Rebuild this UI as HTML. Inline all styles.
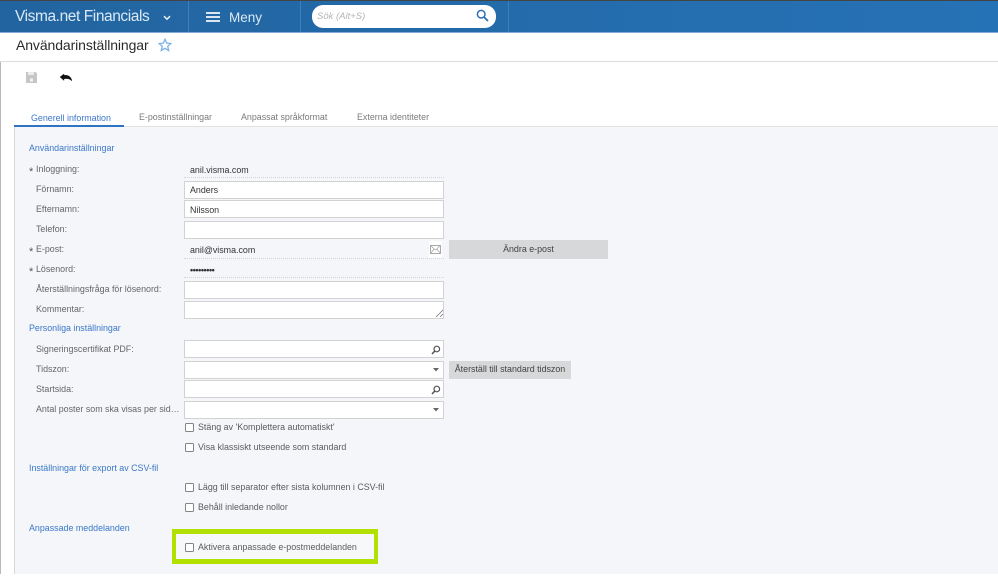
<!DOCTYPE html>
<html lang="sv"><head><meta charset="utf-8"><title>Användarinställningar</title>
<style>
html,body{margin:0;padding:0;background:#fff}
#p{position:relative;width:998px;height:578px;overflow:hidden;background:#fff;font-family:"Liberation Sans",sans-serif;font-size:8.9px;color:#555;filter:blur(.35px)}
#p div,#p span.a,#p svg{position:absolute}
.t{white-space:nowrap;line-height:12px}
.h{color:#3b78c8;left:29px}
.l{left:36px;color:#666}
.s{left:29px;color:#555;font-size:11px}
.i{left:184px;width:258px;background:#fff;border:1px solid #d2d2d2}
.v{left:190px;color:#333}
.c{left:185px;width:7px;height:7px;background:#fff;border:1px solid #858585;border-radius:1.5px}
.k{left:198px;color:#5c5c5c}
.d{left:184px;width:260px;height:0;border-top:1px dotted #d4d4d4}
.b{background:#d7d8da;color:#444;text-align:center}
.tab{top:111px;color:#7b7b7b}
</style></head><body><div id="p">
<div style="left:0;top:0;width:998px;height:1px;background:#444"></div>
<div style="left:0;top:1px;width:998px;height:31px;background:linear-gradient(90deg,#22649f,#2672b6)"></div>
<div style="left:0;top:32px;width:998px;height:1px;background:#7fa9d1"></div>
<div style="left:188px;top:1px;width:1px;height:31px;background:#3f80b8"></div>
<div style="left:300px;top:1px;width:1px;height:31px;background:#3f80b8"></div>
<div style="left:508px;top:1px;width:1px;height:31px;background:#3f80b8"></div>
<div class="t" style="left:15px;top:8px;font-size:15.5px;line-height:18px;letter-spacing:-.42px;color:#dbe9f6">Visma.net Financials</div>
<svg style="left:163px;top:15px" width="8" height="6" viewBox="0 0 8 6"><path d="M1 1.200 4 4.200 7 1.200" fill="none" stroke="#e6f0f8" stroke-width="1.500"/></svg>
<svg style="left:206px;top:12px" width="14" height="10" viewBox="0 0 14 10"><path d="M0 1H14M0 5H14M0 9H14" stroke="#f4f8fc" stroke-width="1.800"/></svg>
<div class="t" style="left:229px;top:10px;font-size:13.500px;line-height:16px;color:#dbe9f6">Meny</div>
<div style="left:312px;top:5px;width:184px;height:23px;background:#fff;border-radius:11px"></div>
<div class="t" style="left:317px;top:11px;font-size:9.500px;font-style:italic;color:#b5b5b5">Sök (Alt+S)</div>
<svg style="left:476px;top:9px" width="13" height="13" viewBox="0 0 13 13"><circle cx="5.200" cy="5.200" r="3.800" fill="none" stroke="#2c70b4" stroke-width="1.500"/><path d="M8 8 12 12" stroke="#2c70b4" stroke-width="1.800"/></svg>

<div class="t" style="left:16px;top:37px;font-size:14px;line-height:17px;letter-spacing:-.1px;color:#2b2b2b">Användarinställningar</div>
<svg style="left:158px;top:38px" width="14" height="14" viewBox="0 0 14 14"><path d="M7 1.200 8.700 5.100 12.900 5.500 9.700 8.300 10.700 12.500 7 10.300 3.300 12.500 4.300 8.300 1.100 5.500 5.300 5.100Z" fill="none" stroke="#7fb0e6" stroke-width="1.300"/></svg>
<div style="left:0;top:61px;width:998px;height:1px;background:#dcdcdc"></div>

<svg style="left:26px;top:72px" width="11" height="11" viewBox="0 0 11 11"><path d="M0 0H9.500L11 1.500V11H0Z" fill="#c6c6c6"/><rect x="2" y="0" width="6" height="3" fill="#ececec"/><rect x="4" y="6.500" width="3" height="3" fill="#f4f4f4"/></svg>
<svg style="left:60px;top:74px" width="12" height="7" viewBox="0 0 12 7"><path d="M0 3 4 0V1.400C8 .8 11 2.400 12 7 10 4.800 7.500 4.200 4 4.800V6.500Z" fill="#111" stroke="#111" stroke-width=".4"/></svg>

<div class="t tab" style="left:31px;top:112px;color:#3b78c8">Generell information</div>
<div class="t tab" style="left:139px">E-postinställningar</div>
<div class="t tab" style="left:241px">Anpassat språkformat</div>
<div class="t tab" style="left:357px">Externa identiteter</div>

<div style="left:0;top:62px;width:1px;height:512px;background:#b8b8b8"></div>
<div style="left:14px;top:127px;width:984px;height:447px;background:#f4f6f9"></div>
<div style="left:14px;top:127px;width:1px;height:447px;background:#d8d8d8"></div>
<div style="left:15px;top:126px;width:983px;height:1px;background:#e2e2e2"></div>
<div style="left:14px;top:125px;width:110px;height:2px;background:#2f74c0"></div>

<div class="t h" style="top:142px">Användarinställningar</div>
<div class="t s" style="top:166px">*</div><div class="t l" style="top:163px">Inloggning:</div>
<div class="t v" style="top:164px">anil.visma.com</div>
<div class="d" style="top:177px"></div>
<div class="t l" style="top:183px">Förnamn:</div>
<div class="i" style="top:181px;height:16px"></div><div class="t v" style="top:184px">Anders</div>
<div class="t l" style="top:203px">Efternamn:</div>
<div class="i" style="top:200px;height:16px"></div><div class="t v" style="top:204px">Nilsson</div>
<div class="t l" style="top:223px">Telefon:</div>
<div class="i" style="top:221px;height:16px"></div>
<div class="t s" style="top:246px">*</div><div class="t l" style="top:243px">E-post:</div>
<div class="t v" style="top:244px">anil@visma.com</div>
<div style="left:429px;top:241px;width:13px;height:17px;background:#fff"></div>
<svg style="left:430px;top:245px" width="11" height="9" viewBox="0 0 11 9"><rect x=".5" y=".5" width="10" height="8" fill="#fff" stroke="#a8a8a8"/><path d="M.5.500 5.500 5 10.500.500M.5 8.500 4 4M10.500 8.500 7 4" fill="none" stroke="#a8a8a8" stroke-width=".8"/></svg>
<div class="d" style="top:258px"></div>
<div class="t b" style="left:449px;top:240px;width:159px;height:19px;line-height:18px">Ändra e-post</div>
<div class="t s" style="top:266px">*</div><div class="t l" style="top:263px">Lösenord:</div>
<div class="t v" style="top:264px;font-weight:bold;letter-spacing:-.4px;color:#333">•••••••••</div>
<div class="d" style="top:277px"></div>
<div class="t l" style="top:283px">Återställningsfråga för lösenord:</div>
<div class="i" style="top:281px;height:16px"></div>
<div class="t l" style="top:303px">Kommentar:</div>
<div class="i" style="top:301px;height:16px"></div>
<svg style="left:435px;top:309px" width="9" height="9" viewBox="0 0 9 9"><path d="M1 8 8 1M5 8 8 5" stroke="#777" stroke-width=".8"/></svg>

<div class="t h" style="top:322px">Personliga inställningar</div>
<div class="t l" style="top:343px">Signeringscertifikat PDF:</div>
<div class="i" style="top:340px;height:16px"></div>
<svg style="left:431px;top:345px" width="10" height="10" viewBox="0 0 10 10"><circle cx="5.800" cy="4" r="2.800" fill="none" stroke="#555" stroke-width="1.200"/><path d="M3.800 6 1 9" stroke="#555" stroke-width="1.600"/></svg>
<div class="t l" style="top:363px">Tidszon:</div>
<div class="i" style="top:361px;height:16px"></div>
<svg style="left:432px;top:368px" width="8" height="4" viewBox="0 0 8 4"><path d="M1 0H7L4 3.500Z" fill="#666"/></svg>
<div class="t b" style="left:449px;top:361px;width:122px;height:18px;line-height:17px">Återställ till standard tidszon</div>
<div class="t l" style="top:383px">Startsida:</div>
<div class="i" style="top:380px;height:16px"></div>
<svg style="left:431px;top:385px" width="10" height="10" viewBox="0 0 10 10"><circle cx="5.800" cy="4" r="2.800" fill="none" stroke="#555" stroke-width="1.200"/><path d="M3.800 6 1 9" stroke="#555" stroke-width="1.600"/></svg>
<div class="t l" style="top:403px">Antal poster som ska visas per sid…</div>
<div class="i" style="top:401px;height:16px"></div>
<svg style="left:432px;top:408px" width="8" height="4" viewBox="0 0 8 4"><path d="M1 0H7L4 3.500Z" fill="#666"/></svg>

<div class="c" style="top:423px"></div><div class="t k" style="top:421px">Stäng av 'Komplettera automatiskt'</div>
<div class="c" style="top:443px"></div><div class="t k" style="top:441px">Visa klassiskt utseende som standard</div>

<div class="t h" style="top:462px">Inställningar för export av CSV-fil</div>
<div class="c" style="top:483px"></div><div class="t k" style="top:481px">Lägg till separator efter sista kolumnen i CSV-fil</div>
<div class="c" style="top:503px"></div><div class="t k" style="top:501px">Behåll inledande nollor</div>

<div class="t h" style="top:522px">Anpassade meddelanden</div>
<div style="left:172px;top:529px;width:198px;height:25px;border:solid #b1e001;border-width:5px 4px;background:#f7f8fa"></div>
<div class="c" style="top:543px"></div><div class="t k" style="top:541px">Aktivera anpassade e-postmeddelanden</div>
</div></body></html>
